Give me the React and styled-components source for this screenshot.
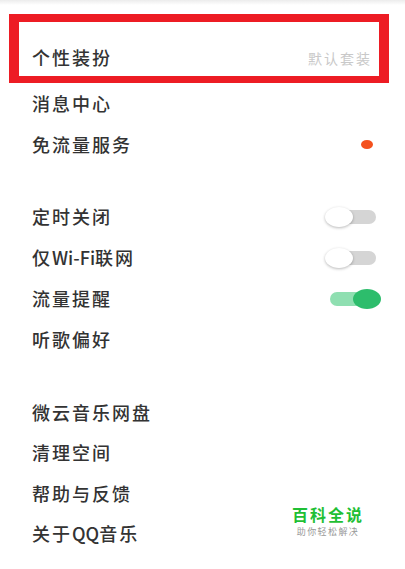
import React from 'react'
import styled, { createGlobalStyle } from 'styled-components'

const Global = createGlobalStyle`
  body {
    margin: 0;
    background: #fff;
    font-family: "Noto Sans CJK SC", "Noto Sans", sans-serif;
  }
`

const Page = styled.div`
  position: relative;
  width: 405px;
  height: 569px;
  overflow: hidden;
  background: linear-gradient(#ececec, #fff 5px);
`

const Highlight = styled.div`
  margin: 14px 0 0 9px;
  width: 380px;
  box-sizing: border-box;
  border: solid #ed1c24;
  border-width: 8px 10px 7px 10px;
  height: 69px;
  padding: 19px 7px 0 13px;
`

const Section = styled.div`
  display: flex;
  flex-direction: column;
  margin-top: ${p => p.gap || 0}px;
`

const Row = styled.div`
  display: flex;
  align-items: center;
  justify-content: space-between;
  height: ${p => p.h || 41}px;
  padding: ${p => (p.inner ? '0' : '0 24px 0 32px')};
`

const Label = styled.span`
  font-size: 18px;
  font-weight: 500;
  letter-spacing: 2px;
  color: #333;
  line-height: 1;
  margin-top: -2px;
`

const Latin = styled.span`
  letter-spacing: 0;
`

const Value = styled.span`
  font-size: 14px;
  letter-spacing: 2px;
  color: #c9c9c9;
`

const Dot = styled.span`
  width: 12px;
  height: 9px;
  border-radius: 50%;
  background: #f4511e;
  margin-right: 8px;
`

const Toggle = styled.div`
  position: relative;
  width: 56px;
  height: 20px;
`

const Track = styled.div`
  position: absolute;
  top: 3px;
  left: ${p => (p.on ? 5 : 3)}px;
  width: ${p => (p.on ? 40 : 48)}px;
  height: 14px;
  border-radius: 7px;
  background: ${p => (p.on ? '#8fdfb1' : '#d5d5d5')};
`

const Knob = styled.div`
  position: absolute;
  top: 0;
  left: ${p => (p.on ? 28 : 0)}px;
  width: 28px;
  height: 20px;
  border-radius: 50%;
  background: ${p => (p.on ? '#2dbd6c' : '#fff')};
  box-shadow: ${p => (p.on ? 'none' : '0 1px 3px rgba(0,0,0,0.28)')};
`

const Mark = styled.div`
  position: absolute;
  left: 292px;
  top: 505px;
  display: flex;
  flex-direction: column;
  align-items: center;
`

const MarkTitle = styled.span`
  font-size: 16px;
  font-weight: bold;
  letter-spacing: 2px;
  color: #1fbf35;
  line-height: 18px;
`

const MarkSub = styled.span`
  font-size: 9px;
  letter-spacing: 1.4px;
  color: #999;
  line-height: 11px;
  margin-top: 3px;
`

const Switch = ({ on }) => (
  <Toggle>
    <Track on={on ? 1 : 0} />
    <Knob on={on ? 1 : 0} />
  </Toggle>
)

export default function App() {
  return (
    <Page>
      <Global />
      <Highlight>
        <Row inner h={34}>
          <Label>个性装扮</Label>
          <Value>默认套装</Value>
        </Row>
      </Highlight>
      <Section>
        <Row><Label>消息中心</Label></Row>
        <Row><Label>免流量服务</Label><Dot /></Row>
      </Section>
      <Section gap={31}>
        <Row><Label>定时关闭</Label><Switch /></Row>
        <Row><Label>仅<Latin>Wi-Fi</Latin>联网</Label><Switch /></Row>
        <Row><Label>流量提醒</Label><Switch on /></Row>
        <Row><Label>听歌偏好</Label></Row>
      </Section>
      <Section gap={32}>
        <Row><Label>微云音乐网盘</Label></Row>
        <Row h={40}><Label>清理空间</Label></Row>
        <Row><Label>帮助与反馈</Label></Row>
        <Row h={40}><Label>关于<Latin>QQ</Latin>音乐</Label></Row>
      </Section>
      <Mark>
        <MarkTitle>百科全说</MarkTitle>
        <MarkSub>助你轻松解决</MarkSub>
      </Mark>
    </Page>
  )
}
